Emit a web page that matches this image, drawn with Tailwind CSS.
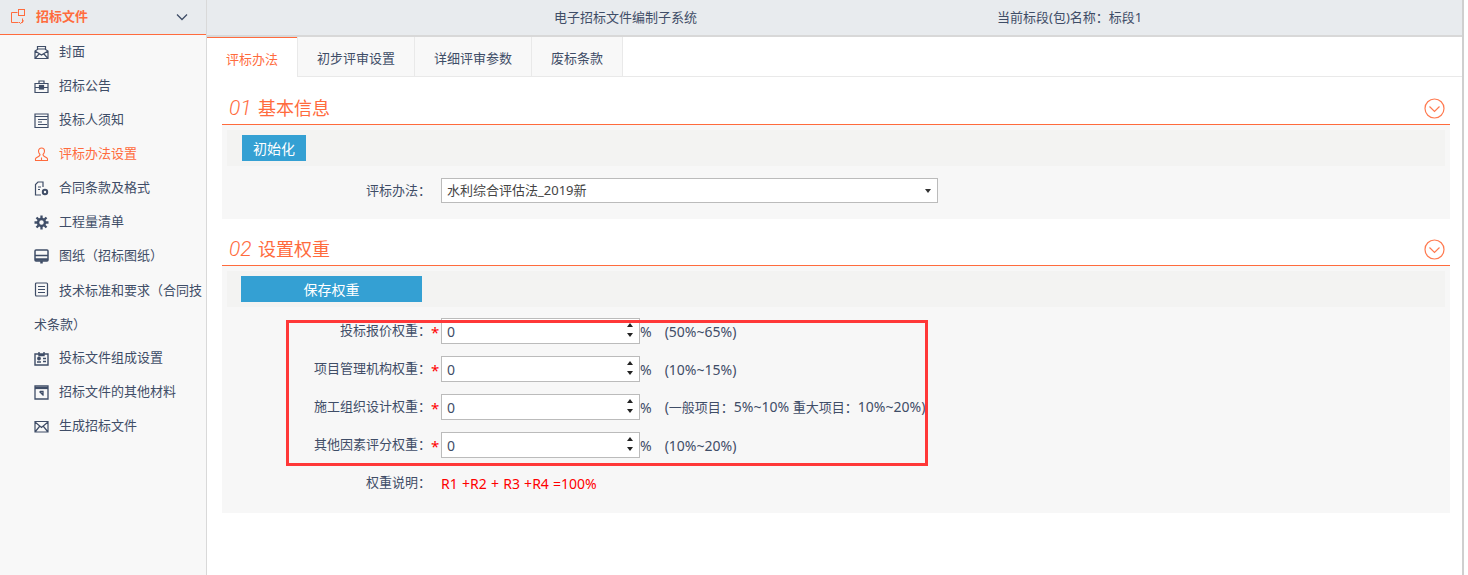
<!doctype html>
<html lang="zh"><head><meta charset="utf-8"><script src="https://cdn.jsdelivr.net/npm/@tailwindcss/browser@4"></script></head>
<body class="bg-white">
<div class="relative flex h-[575px] w-[1468px] overflow-hidden bg-white font-['Noto_Sans','Noto_Sans_CJK_SC',sans-serif] text-[13px] text-[#3f4d67]">
  <aside class="h-full w-[207px] shrink-0 border-r border-[#d9d9d9] bg-[#f8f8f8]">
    <div class="flex h-[35px] items-center border-b border-[#ff6b3d] bg-[#e8ebee] pl-[11px] pr-[18px] text-[#ff6b3d]">
      <svg class="h-[16px] w-[16px]" viewBox="0 0 16 16" fill="none" stroke="#ff6b3d" stroke-width="1"><path d="M6.500 3.500H.5v10h7M10.500 13.500h1V9.500"/><rect x="7.500" y=".5" width="6" height="6"/><path d="M8 13l1.500 1.500L13 11.500"/></svg>
      <span class="ml-[9px] font-bold">招标文件</span>
      <svg class="ml-auto h-[10px] w-[12px]" viewBox="0 0 12 10" fill="none" stroke="#3f4d67" stroke-width="1.300"><path d="M1 2.500l5 5 5-5"/></svg>
    </div>
    <nav>
      <a class="flex h-[34px] items-center pl-[34px]"><svg class="mr-[10px] h-[15px] w-[15px]" viewBox="0 0 15 15" fill="none" stroke="#3f4d67" stroke-width="1.200"><path d="M1 6l2.500-1.500V1.500h8v3L14 6v7.500H1zM1 6l6.500 4L14 6M1 13.500l4.500-5M14 13.500l-4.500-5M4 4h7"/></svg>封面</a>
      <a class="flex h-[34px] items-center pl-[34px]"><svg class="mr-[10px] h-[15px] w-[15px]" viewBox="0 0 15 15" fill="none" stroke="#3f4d67" stroke-width="1.200"><path d="M1 4.500h13v9H1zM5 4.500V2h5v2.500M1 8.500h13"/><rect x="5.500" y="6.500" width="4" height="3.500" fill="#3f4d67"/></svg>招标公告</a>
      <a class="flex h-[34px] items-center pl-[34px]"><svg class="mr-[10px] h-[15px] w-[15px]" viewBox="0 0 15 15" fill="none" stroke="#3f4d67" stroke-width="1.200"><path d="M1 1h13v13.500H1zM1 3.500h13" /><path d="M4 6.500h9M4 9h4M4 11.500h9"/></svg>投标人须知</a>
      <a class="flex h-[34px] items-center pl-[34px] text-[#ff6b3d]"><svg class="mr-[10px] h-[15px] w-[15px]" viewBox="0 0 15 15" fill="none" stroke="#ff6b3d" stroke-width="1.100"><path d="M7.500 1a3 3 0 0 1 3 3c0 1.500-1 3-1.500 3.500 0 1 .5 1.500 1.500 2l2.500 1.500c.7.500.7 1.500.5 2.500H1.500c-.2-1-.2-2 .5-2.500l2.500-1.500c1-.5 1.500-1 1.500-2C5.500 7 4.500 5.500 4.500 4a3 3 0 0 1 3-3zM7.500 10.500v3.500"/></svg>评标办法设置</a>
      <a class="flex h-[34px] items-center pl-[34px]"><svg class="mr-[10px] h-[15px] w-[15px]" viewBox="0 0 15 15" fill="none" stroke="#3f4d67" stroke-width="1.200"><path d="M7 14H1.500V3.500L4 1h5v5"/><path d="M4 6h3M4 8.500h2"/><circle cx="11" cy="11" r="2.200" stroke-width="2"/></svg>合同条款及格式</a>
      <a class="flex h-[34px] items-center pl-[34px]"><svg class="mr-[10px] h-[15px] w-[15px]" viewBox="0 0 15 15" fill="none" stroke="#3f4d67"><circle cx="7.500" cy="7.500" r="3.500" stroke-width="2.500"/><path stroke-width="2.300" d="M7.500.5v3M7.500 11.500v3M.5 7.500h3M11.500 7.500h3M2.500 2.500l2 2M10.500 10.500l2 2M12.500 2.500l-2 2M4.500 10.500l-2 2"/></svg>工程量清单</a>
      <a class="flex h-[34px] items-center pl-[34px]"><svg class="mr-[10px] h-[15px] w-[15px]" viewBox="0 0 15 15" fill="none" stroke="#3f4d67" stroke-width="1.500"><rect x="1" y="1" width="13" height="11" rx="1"/><path d="M1 6.500h13"/><path stroke-width="2.500" d="M1 10.500h13M7.500 12v2.500"/></svg>图纸（招标图纸）</a>
      <a class="block h-[68px] pl-[34px] pr-[2px] leading-[34px]"><svg class="mr-[10px] inline-block h-[15px] w-[15px] align-[-2px]" viewBox="0 0 15 15" fill="none" stroke="#3f4d67" stroke-width="1.200"><rect x="1.500" y="1" width="12" height="13" rx="1"/><path d="M4 4.500h7M4 7.500h7M4 10.500h7"/></svg>技术标准和要求（合同技术条款）</a>
      <a class="flex h-[34px] items-center pl-[34px]"><svg class="mr-[10px] h-[15px] w-[15px]" viewBox="0 0 15 15" fill="none" stroke="#3f4d67" stroke-width="1.400"><path d="M1 3h13v11H1zM5 1v3.500h5V1"/><circle cx="5" cy="7.500" r="1.200" fill="#3f4d67"/><path d="M3 11h4M9 7.500h3M9 10.500h3"/></svg>投标文件组成设置</a>
      <a class="flex h-[34px] items-center pl-[34px]"><svg class="mr-[10px] h-[15px] w-[15px]" viewBox="0 0 15 15" fill="none" stroke="#3f4d67" stroke-width="1.300"><path d="M1 1h13v13H1z"/><path stroke-width="2.200" d="M1 3h13"/><path d="M5.500 6.500l4 4M6 6.500h3v3" /></svg>招标文件的其他材料</a>
      <a class="flex h-[34px] items-center pl-[34px]"><svg class="mr-[10px] h-[15px] w-[15px]" viewBox="0 0 15 15" fill="none" stroke="#3f4d67" stroke-width="1.200"><path d="M1 2.500h13v10.500H1zM1 3l6.500 5.500L14 3M1 13l4.500-5.500M14 13L9.500 7.500"/></svg>生成招标文件</a>
    </nav>
  </aside>
  <main class="relative h-full w-[1257px] shrink-0 border-r-[2px] border-[#cfcfcf]">
    <header class="flex h-[37px] items-center border-b-[2px] border-[#d8d8d8] bg-[#e8ebee]">
      <span class="ml-[347px]">电子招标文件编制子系统</span><span class="ml-[300px]">当前标段(包)名称：标段1</span>
    </header>
    <div class="flex h-[40px] border-b border-[#e9e9e9]">
      <button class="h-[40px] w-[90px] border-t border-[#ff6b3d] bg-white pt-[4px] text-[#ff6b3d]">评标办法</button>
      <button class="w-[118px] border-x border-[#e9e9e9] bg-[#f8f8f8] pt-[4px]">初步评审设置</button>
      <button class="w-[117px] border-r border-[#e9e9e9] bg-[#f8f8f8] pt-[4px]">详细评审参数</button>
      <button class="w-[91px] border-r border-[#e9e9e9] bg-[#f8f8f8] pt-[4px]">废标条款</button>
    </div>
    <section class="mx-[15px] mt-[13px] w-[1228px]">
      <div class="flex h-[35px] items-center border-b border-[#ff6b3d] pt-[3px] text-[#ff6b3d]">
        <span class="w-[36px] pl-[7px] font-['Roboto',sans-serif] text-[21px] font-light italic leading-none">01</span><span class="text-[18px]">基本信息</span>
        <svg class="ml-auto mr-[5px] h-[21px] w-[21px]" viewBox="0 0 21 21" fill="none" stroke="#ff7a50" stroke-width="1.200"><circle cx="10.500" cy="10.500" r="9.500"/><path d="M5.500 8.500l5 5 5-5"/></svg>
      </div>
      <div class="h-[94px] bg-[#f7f7f7] px-[5px] pt-[5px]">
        <div class="flex h-[36px] items-center bg-[#f3f3f2] pl-[15px]"><button class="h-[26px] w-[64px] bg-[#34a0d3] text-[14px] text-white">初始化</button></div>
        <div class="mt-[12px] flex h-[25px] items-center">
          <label class="w-[204px] text-right">评标办法：</label>
          <div class="relative ml-[10px] flex h-[25px] w-[497px] items-center border border-[#bbb] bg-white pl-[5px] text-[#444]">水利综合评估法_2019新<span class="absolute right-[6px] top-[10px] border-x-[3px] border-t-[4px] border-x-transparent border-t-[#333]"></span></div>
        </div>
      </div>
    </section>
    <section class="mx-[15px] mt-[12px] w-[1228px]">
      <div class="flex h-[35px] items-center border-b border-[#ff6b3d] pt-[3px] text-[#ff6b3d]">
        <span class="w-[36px] pl-[7px] font-['Roboto',sans-serif] text-[21px] font-light italic leading-none">02</span><span class="text-[18px]">设置权重</span>
        <svg class="ml-auto mr-[5px] h-[21px] w-[21px]" viewBox="0 0 21 21" fill="none" stroke="#ff7a50" stroke-width="1.200"><circle cx="10.500" cy="10.500" r="9.500"/><path d="M5.500 8.500l5 5 5-5"/></svg>
      </div>
      <div class="h-[247px] bg-[#f7f7f7] px-[5px] pt-[5px]">
        <div class="flex h-[36px] items-center bg-[#f3f3f2] pl-[14px]"><button class="h-[26px] w-[181px] bg-[#34a0d3] text-[14px] text-white">保存权重</button></div>
        <div class="mt-[11px] flex flex-col gap-[12px]">
          <div class="flex h-[26px] items-center">
            <label class="w-[204px] text-right">投标报价权重：</label><span class="w-[10px] pr-[3px] pt-[3px] text-center text-[15px] leading-none text-[#f00]">*</span>
            <div class="relative flex h-[26px] w-[199px] items-center border border-[#bbb] bg-white pl-[5px] text-[14px]">0<span class="absolute right-[6px] top-[4px] border-x-[3px] border-b-[4px] border-x-transparent border-b-[#222]"></span><span class="absolute bottom-[6px] right-[6px] border-x-[3px] border-t-[4px] border-x-transparent border-t-[#222]"></span></div>
            <span class="text-[14px]">%</span><span class="ml-[13px] text-[14px]">(50%~65%)</span>
          </div>
          <div class="flex h-[26px] items-center">
            <label class="w-[204px] text-right">项目管理机构权重：</label><span class="w-[10px] pr-[3px] pt-[3px] text-center text-[15px] leading-none text-[#f00]">*</span>
            <div class="relative flex h-[26px] w-[199px] items-center border border-[#bbb] bg-white pl-[5px] text-[14px]">0<span class="absolute right-[6px] top-[4px] border-x-[3px] border-b-[4px] border-x-transparent border-b-[#222]"></span><span class="absolute bottom-[6px] right-[6px] border-x-[3px] border-t-[4px] border-x-transparent border-t-[#222]"></span></div>
            <span class="text-[14px]">%</span><span class="ml-[13px] text-[14px]">(10%~15%)</span>
          </div>
          <div class="flex h-[26px] items-center">
            <label class="w-[204px] text-right">施工组织设计权重：</label><span class="w-[10px] pr-[3px] pt-[3px] text-center text-[15px] leading-none text-[#f00]">*</span>
            <div class="relative flex h-[26px] w-[199px] items-center border border-[#bbb] bg-white pl-[5px] text-[14px]">0<span class="absolute right-[6px] top-[4px] border-x-[3px] border-b-[4px] border-x-transparent border-b-[#222]"></span><span class="absolute bottom-[6px] right-[6px] border-x-[3px] border-t-[4px] border-x-transparent border-t-[#222]"></span></div>
            <span class="text-[14px]">%</span><span class="ml-[13px] whitespace-nowrap text-[14px]">(<span class="text-[13px]">一般项目：</span>5%~10% <span class="text-[13px]">重大项目：</span>10%~20%)</span>
          </div>
          <div class="flex h-[26px] items-center">
            <label class="w-[204px] text-right">其他因素评分权重：</label><span class="w-[10px] pr-[3px] pt-[3px] text-center text-[15px] leading-none text-[#f00]">*</span>
            <div class="relative flex h-[26px] w-[199px] items-center border border-[#bbb] bg-white pl-[5px] text-[14px]">0<span class="absolute right-[6px] top-[4px] border-x-[3px] border-b-[4px] border-x-transparent border-b-[#222]"></span><span class="absolute bottom-[6px] right-[6px] border-x-[3px] border-t-[4px] border-x-transparent border-t-[#222]"></span></div>
            <span class="text-[14px]">%</span><span class="ml-[13px] text-[14px]">(10%~20%)</span>
          </div>
          <div class="flex h-[26px] items-center">
            <label class="w-[204px] text-right">权重说明：</label><span class="ml-[10px] whitespace-pre text-[14px] text-[#f00] [word-spacing:0.6px]">R1 +R2 + R3 +R4 =100%</span>
          </div>
        </div>
      </div>
    </section>
  </main>
  <div class="pointer-events-none absolute left-[286px] top-[320px] h-[146px] w-[642px] border-[3px] border-[#ff3838]"></div>
</div>
</body></html>
